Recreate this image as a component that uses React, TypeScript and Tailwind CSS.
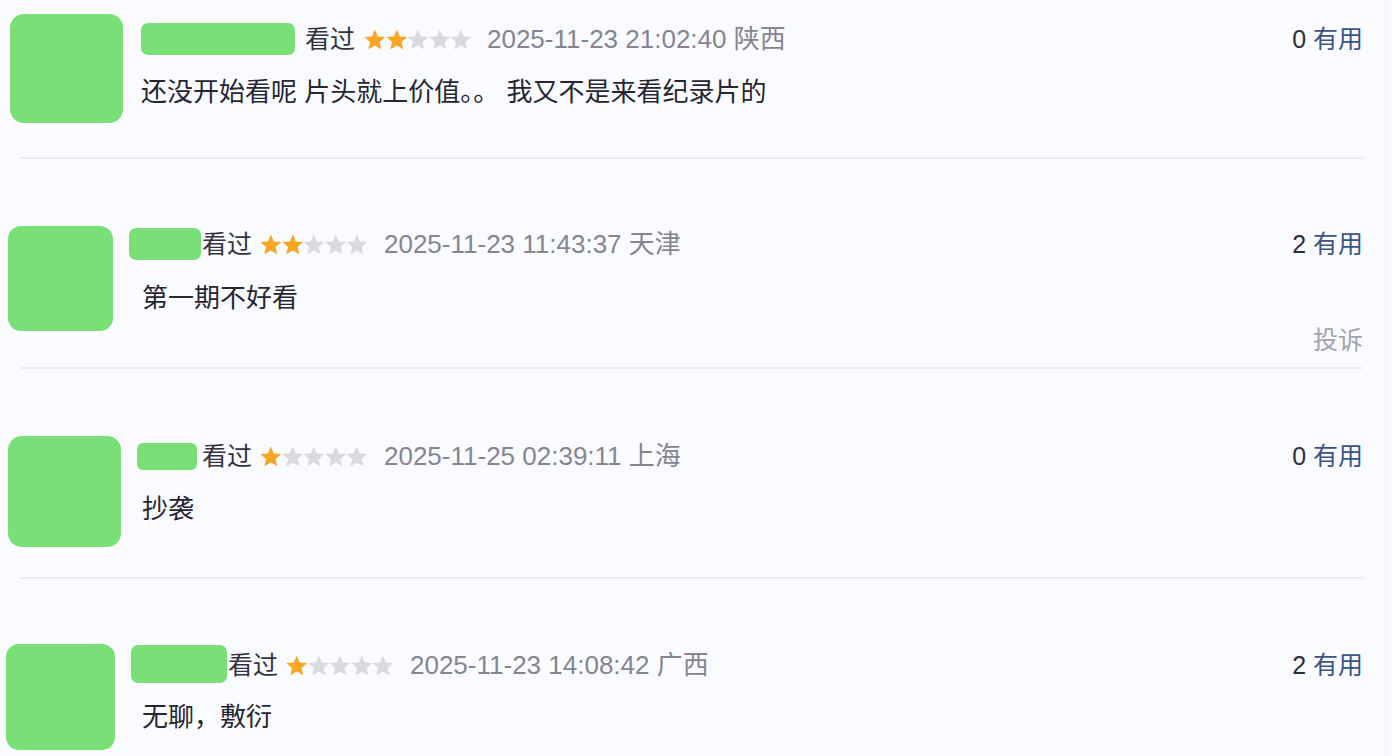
import React from "react";

const FONT = "font-['Liberation_Sans','Noto_Sans_CJK_SC',sans-serif]";

function Star({ filled }: { filled: boolean }) {
  return (
    <svg width="21.6" height="21" viewBox="1.6 1.8 20.8 20" className="shrink-0">
      <path
        d="M12 2.2l2.85 6.6 7.15.65-5.42 4.72 1.62 7.03L12 17.5l-6.2 3.7 1.62-7.03L2 9.45l7.15-.65z"
        fill={filled ? "#f6a623" : "#d9dade"}
      />
    </svg>
  );
}

function Stars({ n, className }: { n: number; className: string }) {
  return (
    <div className={"flex items-center " + className}>
      {[0, 1, 2, 3, 4].map((i) => (
        <Star key={i} filled={i < n} />
      ))}
    </div>
  );
}

function Useful({ count }: { count: number }) {
  return (
    <div className="flex items-center whitespace-pre">
      <span className="text-[#2e2e3a]">{count} </span>
      <span className="text-[#3b5488]">有用</span>
    </div>
  );
}

const Divider = () => <div className="ml-[20px] mr-[22px] h-[2px] bg-[#ececf1]" />;

export default function App() {
  return (
    <div className={"h-[756px] w-[1392px] overflow-hidden bg-[#fafbfe] text-[25px] leading-none text-[#2a2a36] " + FONT}>
      <div className="h-full w-[1386px] border-r border-[#f0f1f4]">
        {/* Row 1 */}
        <div className="flex h-[157px]">
          <div className="ml-[10px] mt-[14px] h-[109px] w-[113px] shrink-0 rounded-[14px] bg-[#78e077]" />
          <div className="ml-[18px] flex-1">
            <div className="mt-[22px] flex h-[34px] items-center">
              <div className="h-[32px] w-[154px] rounded-[7px] bg-[#78e077]" />
              <span className="ml-[10px] text-[#33333f]">看过</span>
              <Stars n={2} className="ml-[9px]" />
              <span className="ml-[15px] text-[26px] text-[#858592]">2025-11-23 21:02:40 陕西</span>
            </div>
            <div className="mt-[20px] flex h-[32px] items-center whitespace-pre text-[26px] text-[#262632]">
              还没开始看呢 片头就上价值。。 我又不是来看纪录片的
            </div>
          </div>
          <div className="mr-[22px] mt-[22px] flex h-[34px] items-center">
            <Useful count={0} />
          </div>
        </div>
        <Divider />

        {/* Row 2 */}
        <div className="flex h-[208px]">
          <div className="ml-[8px] mt-[67px] h-[105px] w-[105px] shrink-0 rounded-[13px] bg-[#78e077]" />
          <div className="ml-[16px] flex-1">
            <div className="mt-[68px] flex h-[34px] items-center">
              <div className="h-[32px] w-[72px] rounded-[7px] bg-[#78e077]" />
              <span className="ml-[1px] text-[#33333f]">看过</span>
              <Stars n={2} className="ml-[8px]" />
              <span className="ml-[16px] text-[26px] text-[#858592]">2025-11-23 11:43:37 天津</span>
            </div>
            <div className="ml-[13px] mt-[21px] flex h-[32px] items-center text-[26px] text-[#262632]">第一期不好看</div>
          </div>
          <div className="mr-[22px] mt-[68px] flex flex-col items-end">
            <div className="flex h-[34px] items-center">
              <Useful count={2} />
            </div>
            <div className="mt-[63px] flex h-[32px] items-center text-[#a3a3ab]">投诉</div>
          </div>
        </div>
        <Divider />

        {/* Row 3 */}
        <div className="flex h-[208px]">
          <div className="ml-[8px] mt-[67px] h-[111px] w-[113px] shrink-0 rounded-[14px] bg-[#78e077]" />
          <div className="ml-[16px] flex-1">
            <div className="mt-[70px] flex h-[34px] items-center">
              <div className="h-[27px] w-[60px] rounded-[6px] bg-[#78e077]" />
              <span className="ml-[5px] text-[#33333f]">看过</span>
              <Stars n={1} className="ml-[8px]" />
              <span className="ml-[16px] text-[26px] text-[#858592]">2025-11-25 02:39:11 上海</span>
            </div>
            <div className="ml-[5px] mt-[20px] flex h-[32px] items-center text-[26px] text-[#262632]">抄袭</div>
          </div>
          <div className="mr-[22px] mt-[70px] flex h-[34px] items-center">
            <Useful count={0} />
          </div>
        </div>
        <Divider />

        {/* Row 4 */}
        <div className="flex h-[177px]">
          <div className="ml-[6px] mt-[65px] h-[106px] w-[109px] shrink-0 rounded-[13px] bg-[#78e077]" />
          <div className="ml-[16px] flex-1">
            <div className="mt-[66px] flex h-[38px] items-center">
              <div className="h-[38px] w-[96px] rounded-[7px] bg-[#78e077]" />
              <span className="ml-[1px] mt-[2px] text-[#33333f]">看过</span>
              <Stars n={1} className="ml-[8px] mt-[2px]" />
              <span className="ml-[16px] mt-[2px] text-[26px] text-[#858592]">2025-11-23 14:08:42 广西</span>
            </div>
            <div className="ml-[11px] mt-[18px] flex h-[32px] items-center text-[26px] text-[#262632]">无聊，敷衍</div>
          </div>
          <div className="mr-[22px] mt-[67px] flex h-[38px] items-center">
            <Useful count={2} />
          </div>
        </div>
      </div>
    </div>
  );
}
